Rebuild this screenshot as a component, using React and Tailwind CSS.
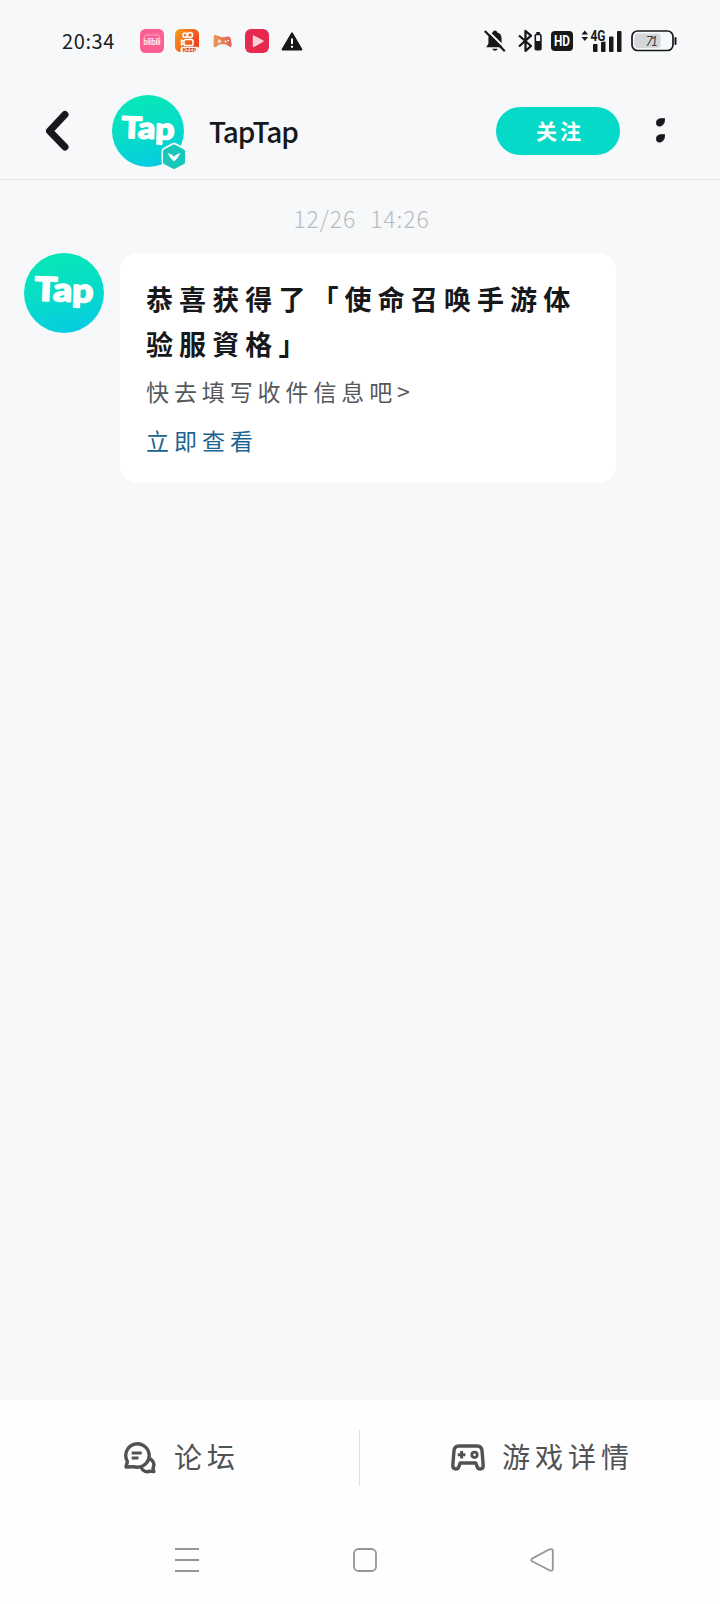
function TapAvatar({ className, id, size }) {
  return (
    <svg className={className} width={size} height={size} viewBox="0 0 80 80">
      <defs>
        <linearGradient id={id} x1="0.35" y1="0" x2="0.6" y2="1">
          <stop offset="0" stopColor="#06e8b6" />
          <stop offset="0.5" stopColor="#08dcc8" />
          <stop offset="1" stopColor="#04cce2" />
        </linearGradient>
      </defs>
      <circle cx="40" cy="40" r="40" fill={`url(#${id})`} />
      <text x="10.500" y="48.500" textLength="59" lengthAdjust="spacingAndGlyphs" fontFamily="Lato, sans-serif" fontWeight="900" fontSize="33" fill="#fff" stroke="#fff" strokeWidth="1.600" strokeLinejoin="round" transform="rotate(2 40 40)">Tap</text>
    </svg>
  );
}

function StatusBar() {
  return (
    <div className="flex h-[82px] items-center pl-[62px] pr-[43px] text-[#1b1c1e]">
      <span className="w-[78px] text-[20px] leading-none tracking-[0.600px]">20:34</span>
      <div className="flex items-center gap-[11px]">
        <svg width="24" height="24" viewBox="0 0 24 24">
          <rect width="24" height="24" rx="5.500" fill="#fb5f93" />
          <path d="M4.500 9V7.500q0-1.500 2-1.500h11q2 0 2 1.500V9M8.500 6L7 4.500M15.500 6L17 4.500" stroke="#fda3c1" fill="none" />
          <text x="3.500" y="15.800" textLength="17" lengthAdjust="spacingAndGlyphs" fontFamily="Lato" fontWeight="700" fontSize="8.500" fill="#fff">bilibili</text>
        </svg>
        <svg width="24" height="24" viewBox="0 0 24 24">
          <defs>
            <linearGradient id="ks" x1="0" y1="0" x2="1" y2="0.6">
              <stop offset="0" stopColor="#f9a01f" />
              <stop offset="1" stopColor="#ee3f1b" />
            </linearGradient>
          </defs>
          <rect width="24" height="23" rx="5.500" fill="url(#ks)" />
          <g fill="none" stroke="#fff" strokeWidth="1.500">
            <circle cx="10" cy="6.200" r="2.100" />
            <circle cx="15" cy="6" r="2.500" />
            <rect x="9" y="10.500" width="9" height="6" rx="1.800" />
            <path d="M9 12.500l-2.500-1.200v4.400l2.500-1.200" />
          </g>
          <rect x="5.500" y="17.800" width="18.500" height="6.200" rx="2" fill="#fff3ee" />
          <text x="7.500" y="22.800" textLength="13.500" lengthAdjust="spacingAndGlyphs" fontFamily="Lato" fontWeight="900" fontSize="5.500" fill="#c9332a">KEEP</text>
        </svg>
        <svg width="24" height="24" viewBox="0 0 24 24">
          <defs>
            <linearGradient id="gp" x1="0" y1="0" x2="1" y2="0">
              <stop offset="0" stopColor="#e99a55" />
              <stop offset="1" stopColor="#e0605a" />
            </linearGradient>
          </defs>
          <path d="M5 5.800l7 2.400 6.500-.8q2 .2 2.400 2.600l.8 6q-.2 2.400-2 1.800l-4.200-2.600H10l-4.500 3q-2 .4-2.100-1.600l.4-8.800q.2-1.800 1.200-2z" fill="url(#gp)" />
          <path d="M8 10l4 2.200-4 2.500z" fill="#fbe0cc" />
          <circle cx="15.500" cy="12.500" r=".9" fill="#fff" />
          <circle cx="18.300" cy="11.600" r=".9" fill="#fff" />
        </svg>
        <svg width="24" height="24" viewBox="0 0 24 24">
          <rect width="24" height="24" rx="6" fill="#e5294f" />
          <path d="M8.500 7l9.500 5.200-9.500 5.200z" fill="#fbd0da" stroke="#fbd0da" strokeWidth="1.400" strokeLinejoin="round" />
        </svg>
        <svg width="24" height="24" viewBox="0 0 24 24">
          <path d="M12 4.200L21.500 20.500H2.500z" fill="#161719" stroke="#161719" strokeWidth="1.800" strokeLinejoin="round" />
          <path d="M12 9.500v5.500M12 16.800v2" stroke="#fff" strokeWidth="2" />
        </svg>
      </div>
      <div className="ml-auto flex items-center">
        <svg width="22" height="24" viewBox="0 0 22 24">
          <path d="M11 1.500c1.200 0 2 .8 2 1.800 3.200.8 4.600 3.200 4.600 6.500v5l2.200 3.500H2.200l2.200-3.500v-5c0-3.300 1.400-5.700 4.600-6.500 0-1 .8-1.800 2-1.800zM8.200 19.800h5.600q-.8 2-2.800 2t-2.800-2z" fill="#17181a" />
          <path d="M2.500.5l20 20" stroke="#f6f8fa" strokeWidth="2" />
          <path d="M.8 2l20 20.200" stroke="#17181a" strokeWidth="2.200" />
        </svg>
        <svg className="ml-3" width="24" height="24" viewBox="0 0 24 24">
          <path d="M1 6.500l12 10.500-5.500 4.800V2l5.500 4.700L1 17.500" fill="none" stroke="#17181a" strokeWidth="2.300" strokeLinejoin="round" />
          <path d="M18.300 3h3.600v2.500h-3.600z" fill="#17181a" />
          <rect x="17.300" y="5.500" width="5.600" height="15.300" rx="1" fill="none" stroke="#17181a" strokeWidth="1.600" />
          <rect x="17" y="12" width="6" height="9" fill="#17181a" />
        </svg>
        <svg className="ml-[9px]" width="22" height="20" viewBox="0 0 22 20">
          <rect width="22" height="20" rx="4" fill="#17181a" />
          <text x="3" y="15" textLength="16" lengthAdjust="spacingAndGlyphs" fontFamily="Roboto" fontWeight="700" fontSize="14" fill="#fff">HD</text>
        </svg>
        <svg className="ml-[8px]" width="41" height="24" viewBox="0 0 41 24">
          <path d="M.5 5.500L3.800 1.500l3.300 4zM.5 8l3.300 4 3.300-4z" fill="#17181a" />
          <rect x="12" y="15" width="4.500" height="8" rx=".8" fill="#17181a" />
          <rect x="20" y="12.500" width="4.500" height="10.500" rx=".8" fill="#17181a" />
          <rect x="28" y="7.500" width="4.500" height="15.500" rx="1" fill="#17181a" />
          <rect x="36" y="2" width="4.500" height="21" rx="1" fill="#17181a" />
          <text x="9.500" y="12" textLength="15" lengthAdjust="spacingAndGlyphs" fontFamily="Roboto" fontWeight="700" fontSize="14" fill="#17181a" stroke="#f6f8fa" strokeWidth="1.500" paintOrder="stroke">4G</text>
        </svg>
        <svg className="ml-[9px]" width="46" height="22" viewBox="0 0 46 22">
          <rect x="1" y="1" width="41" height="19.500" rx="5.500" fill="none" stroke="#17181a" strokeWidth="1.700" />
          <rect x="3.500" y="3.500" width="26" height="14.500" rx="3" fill="#d5d6d7" />
          <path d="M44.500 8v6" stroke="#17181a" strokeWidth="2" strokeLinecap="round" />
          <text x="14.500" y="15.500" textLength="12.500" fontFamily="Lato" fontStyle="italic" fontSize="13" fill="#3b3c3e">71</text>
        </svg>
      </div>
    </div>
  );
}

function Header() {
  return (
    <header className="flex h-[98px] items-center border-b border-[#e3e5e7] pl-[45px] pr-[55px]">
      <svg width="26" height="42" viewBox="0 0 26 42">
        <path d="M20 4.500L4.500 21l15.500 16" fill="none" stroke="#17181b" strokeWidth="7" strokeLinecap="round" strokeLinejoin="round" />
      </svg>
      <div className="relative ml-[41px] h-[72px] w-[72px]">
        <TapAvatar id="avatarSmall" size="72" />
        <svg className="absolute left-[48px] top-[46px]" width="28" height="32" viewBox="0 0 28 32">
          <path d="M14 5L23 10v11L14 26 5 21V10z" fill="#f6f8fa" stroke="#f6f8fa" strokeWidth="7" strokeLinejoin="round" />
          <path d="M14 5.500L23 10.300v10.900L14 26 5 21.200V10.300z" fill="#17c7ba" stroke="#17c7ba" strokeWidth="4" strokeLinejoin="round" />
          <path d="M7.500 12l4.500 1.800 2 2 2-2 4.500-1.800-3 5-3.500 3.400-3.500-3.400z" fill="#fff" />
        </svg>
      </div>
      <h1 className="ml-[25px] text-[28px] font-medium leading-none tracking-[-1.100px] text-[#17181b]">TapTap</h1>
      <button className="ml-auto flex h-12 w-[124px] items-center justify-center rounded-full bg-[#05d9c7] pl-1 text-[21px] font-bold leading-none tracking-[3px] text-white">关注</button>
      <svg className="ml-9" width="9" height="25" viewBox="0 0 9 25">
        <path d="M3.200.8Q6 0 8.900.6 9.200 4 7.200 6.500 5 9 2 8 0 7 .1 4.200.6 1.600 3.200.8zM3.200 16.800Q6 16 8.900 16.600 9.200 20 7.200 22.500 5 25 2 24 0 23 .1 20.200.6 17.600 3.200 16.800z" fill="#17181b" stroke="#17181b" strokeWidth=".5" />
      </svg>
    </header>
  );
}

function Message() {
  return (
    <div className="mt-[18px] flex items-start gap-4 pl-6">
      <TapAvatar id="avatarLarge" size="80" />
      <article className="h-[230px] w-[496px] rounded-[18px] bg-white pl-[26px] pt-[23px]">
        <h2 className="w-[440px] whitespace-nowrap text-[27px] font-bold leading-[45px] tracking-[6.100px] text-[#17181b]">恭喜获得了「使命召唤手游体<br />验服資格」</h2>
        <p className="mt-[2px] text-[23px] leading-[46px] tracking-[4.900px] text-[#55585c]">快去填写收件信息吧&gt;</p>
        <a className="block text-[23px] leading-[52px] tracking-[5px] text-[#1c6390]">立即查看</a>
      </article>
    </div>
  );
}

function BottomBar() {
  return (
    <div className="flex h-[115px] items-center text-[#505255]">
      <button className="flex h-[56px] w-[360px] items-center border-r border-[#dfe0e1] pl-[123px]">
        <svg width="34" height="32" viewBox="0 0 34 32">
          <g fill="none" stroke="#505255" strokeWidth="3.400" strokeLinejoin="round">
            <path d="M3 25l1.400-5.500A11.700 11.700 0 1 1 13.500 25.200q-1.500 0-3-.5z" />
            <path d="M25 16.500a6.200 6.200 0 0 1 5 9.300l.8 3.700-3.800-.4a6.500 6.500 0 0 1-8.800-3.600" />
            <path d="M8.700 11h10M8.700 16h6.800" strokeWidth="3" />
          </g>
        </svg>
        <span className="ml-[17px] -mt-1 text-[28px] leading-none tracking-[5px]">论坛</span>
      </button>
      <button className="flex h-[56px] flex-1 items-center pl-[91px]">
        <svg width="34" height="27" viewBox="0 0 34 27">
          <path d="M8 2h18q4.500 0 5 4.500l1.200 15q0 3.500-3 3.500-2.200 0-3-2.200L24.800 19H9.200l-1.400 3.800Q7 25 4.800 25 1.800 25 1.800 21.500L3 6.500Q3.500 2 8 2z" fill="none" stroke="#505255" strokeWidth="3.400" strokeLinejoin="round" />
          <path d="M6.800 10.800h7.600M10.600 7v7.600" stroke="#505255" strokeWidth="3" />
          <circle cx="23.500" cy="10.800" r="2.700" fill="none" stroke="#505255" strokeWidth="2.800" />
        </svg>
        <span className="ml-[17px] -mt-1 text-[28px] leading-none tracking-[5px]">游戏详情</span>
      </button>
    </div>
  );
}

function NavigationBar() {
  return (
    <nav className="flex h-[89px] items-center pl-[175px]">
      <svg width="24" height="26" viewBox="0 0 24 26">
        <path d="M0 2h24M0 13h24M0 24h24" stroke="#969696" strokeWidth="2" />
      </svg>
      <svg className="ml-[154px]" width="24" height="24" viewBox="0 0 24 24">
        <rect x="1" y="1" width="22" height="22" rx="4.500" fill="none" stroke="#969696" strokeWidth="1.800" />
      </svg>
      <svg className="ml-[153px]" width="24" height="24" viewBox="0 0 24 24">
        <path d="M2 10.600L19.500 1.300Q22.800.5 22.800 3v18Q22.800 23.500 19.500 22.300L2 13.200Q.5 12 2 10.600z" fill="none" stroke="#969696" strokeWidth="1.800" strokeLinejoin="round" />
      </svg>
    </nav>
  );
}

export default function App() {
  return (
    <div className="flex h-[1604px] w-[720px] flex-col overflow-hidden bg-[#f6f8fa] font-['Noto_Sans_CJK_SC',sans-serif]">
      <StatusBar />
      <Header />
      <main className="flex-1">
        <time className="mt-[24px] mb-[21px] block pl-[3px] text-center text-[23px] font-light leading-7 tracking-[0.900px] text-[#b9bcbf] [word-spacing:8px]">12/26 14:26</time>
        <Message />
      </main>
      <footer className="border-t-[10px] border-[#f7f7f7] bg-[#fefefe]">
        <BottomBar />
        <NavigationBar />
      </footer>
    </div>
  );
}
